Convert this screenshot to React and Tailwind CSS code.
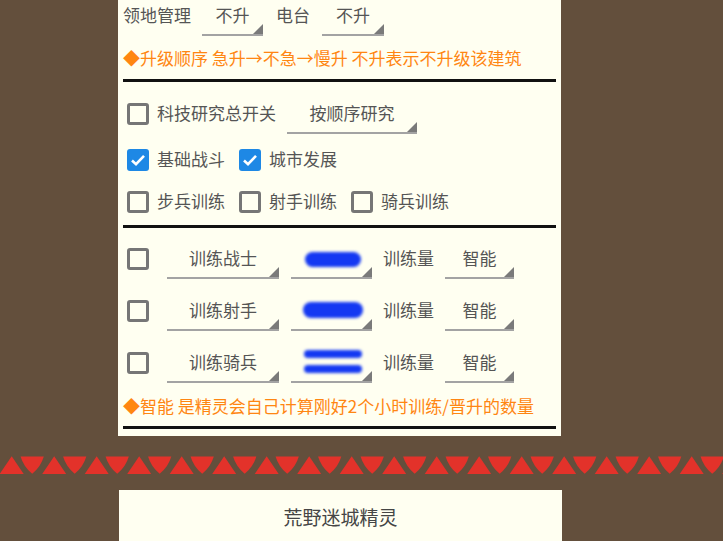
import React from "react";

const Checkbox = ({ checked, className = "" }) =>
  checked ? (
    <div className={`mt-[2px] w-[22px] h-[22px] rounded-[3px] bg-[#1e88e5] flex items-center justify-center shrink-0 ${className}`}>
      <svg width="18" height="18" viewBox="0 0 18 18">
        <path d="M3 9.5 L7 13.2 L15 4.8" fill="none" stroke="#fff" strokeWidth="2.6" />
      </svg>
    </div>
  ) : (
    <div className={`mt-[2px] w-[22px] h-[22px] rounded-[3px] border-[3px] border-[#767676] shrink-0 ${className}`} />
  );

const Dropdown = ({ className = "", children }) => (
  <div className={`relative h-[33px] border-b-2 border-[#a3a3a3] shrink-0 text-center leading-[24px] ${className}`}>
    {children}
    <div className="absolute right-0 bottom-0 w-0 h-0 border-l-[10px] border-l-transparent border-b-[10px] border-b-[#7a7a7a]" />
  </div>
);

// redacted value, blurred blue marker
const Blob = ({ className = "" }) => (
  <div className={`mx-auto rounded-full bg-[#1438f2] blur-[1.5px] ${className}`} />
);

const Triangles = () => {
  const p = 42.5;
  const items = [];
  for (let k = 0; k < 18; k++) {
    const x = k * p;
    items.push(
      <polygon key={"u" + k} points={`${x - 0.3},18 ${x + 11.7},0.3 ${x + 23.7},18`} fill="#e3322a" />
    );
    items.push(
      <path
        key={"d" + k}
        d={`M${x + 20.6} 0.5 L${x + 43.8} 0.5 Q${x + 41} 10.5 ${x + 32.2} 17.8 Q${x + 23.4} 10.5 ${x + 20.6} 0.5 Z`}
        fill="#e3322a"
      />
    );
  }
  return (
    <svg width="723" height="18" viewBox="0 0 723 18" className="block">
      {items}
    </svg>
  );
};

const TrainRow = ({ name, blob, className = "" }) => (
  <div className={`flex items-start h-[33px] ${className}`}>
    <Checkbox className="ml-[4px]" />
    <Dropdown className="ml-[18px] w-[112px]">{name}</Dropdown>
    <Dropdown className="ml-[12px] w-[81px] pl-[2px]">{blob}</Dropdown>
    <span className="ml-[11px] leading-[24px]">训练量</span>
    <Dropdown className="ml-[11px] w-[69px]">智能</Dropdown>
  </div>
);

export default function App() {
  return (
    <div className="w-[723px] h-[541px] overflow-hidden bg-[#634f3c] text-[17px] text-[#555] font-['Noto_Sans_CJK_SC','Noto_Sans',sans-serif]">
      {/* settings panel */}
      <div className="ml-[118px] w-[443px] h-[436px] bg-[#fffff1] px-[5px] flex flex-col">
        <div className="mt-[3px] flex items-start h-[33px]">
          <span className="leading-[24px]">领地管理</span>
          <Dropdown className="ml-[11px] w-[61px]">不升</Dropdown>
          <span className="ml-[13px] leading-[24px]">电台</span>
          <Dropdown className="ml-[12px] w-[62px]">不升</Dropdown>
        </div>
        <div className="mt-[10px] h-[24px] leading-[24px] text-[#ff8612] whitespace-nowrap">
          ◆升级顺序 急升→不急→慢升 不升表示不升级该建筑
        </div>
        <div className="mt-[9px] h-[3px] bg-[#111]" />

        <div className="mt-[19px] flex items-start h-[33px]">
          <Checkbox className="ml-[4px]" />
          <span className="ml-[8px] leading-[24px]">科技研究总开关</span>
          <Dropdown className="ml-[11px] w-[130px]">按顺序研究</Dropdown>
        </div>
        <div className="mt-[13px] flex items-start h-[24px]">
          <Checkbox checked className="ml-[4px]" />
          <span className="ml-[8px] leading-[24px]">基础战斗</span>
          <Checkbox checked className="ml-[14px]" />
          <span className="ml-[8px] leading-[24px]">城市发展</span>
        </div>
        <div className="mt-[18px] flex items-start h-[24px]">
          <Checkbox className="ml-[4px]" />
          <span className="ml-[8px] leading-[24px]">步兵训练</span>
          <Checkbox className="ml-[14px]" />
          <span className="ml-[8px] leading-[24px]">射手训练</span>
          <Checkbox className="ml-[14px]" />
          <span className="ml-[8px] leading-[24px]">骑兵训练</span>
        </div>
        <div className="mt-[12px] h-[3px] bg-[#111]" />

        <TrainRow className="mt-[18px]" name="训练战士" blob={<Blob className="mt-[6px] w-[56px] h-[15px]" />} />
        <TrainRow className="mt-[19px]" name="训练射手" blob={<Blob className="mt-[4px] w-[60px] h-[16px]" />} />
        <TrainRow
          className="mt-[19px]"
          name="训练骑兵"
          blob={
            <div className="flex flex-col items-center">
              <Blob className="w-[58px] h-[8px]" />
              <Blob className="mt-[7px] w-[58px] h-[8px]" />
            </div>
          }
        />
        <div className="mt-[11px] h-[24px] leading-[24px] text-[#ff8612] whitespace-nowrap">
          ◆智能 是精灵会自己计算刚好2个小时训练/晋升的数量
        </div>
        <div className="mt-[8px] h-[3px] bg-[#111]" />
      </div>

      <div className="mt-[20px]">
        <Triangles />
      </div>

      <div className="mt-[16px] ml-[119px] w-[443px] h-[60px] bg-[#fffff1] pt-[13px] text-center text-[19px] leading-[28px] text-[#454545]">
        荒野迷城精灵
      </div>
    </div>
  );
}
